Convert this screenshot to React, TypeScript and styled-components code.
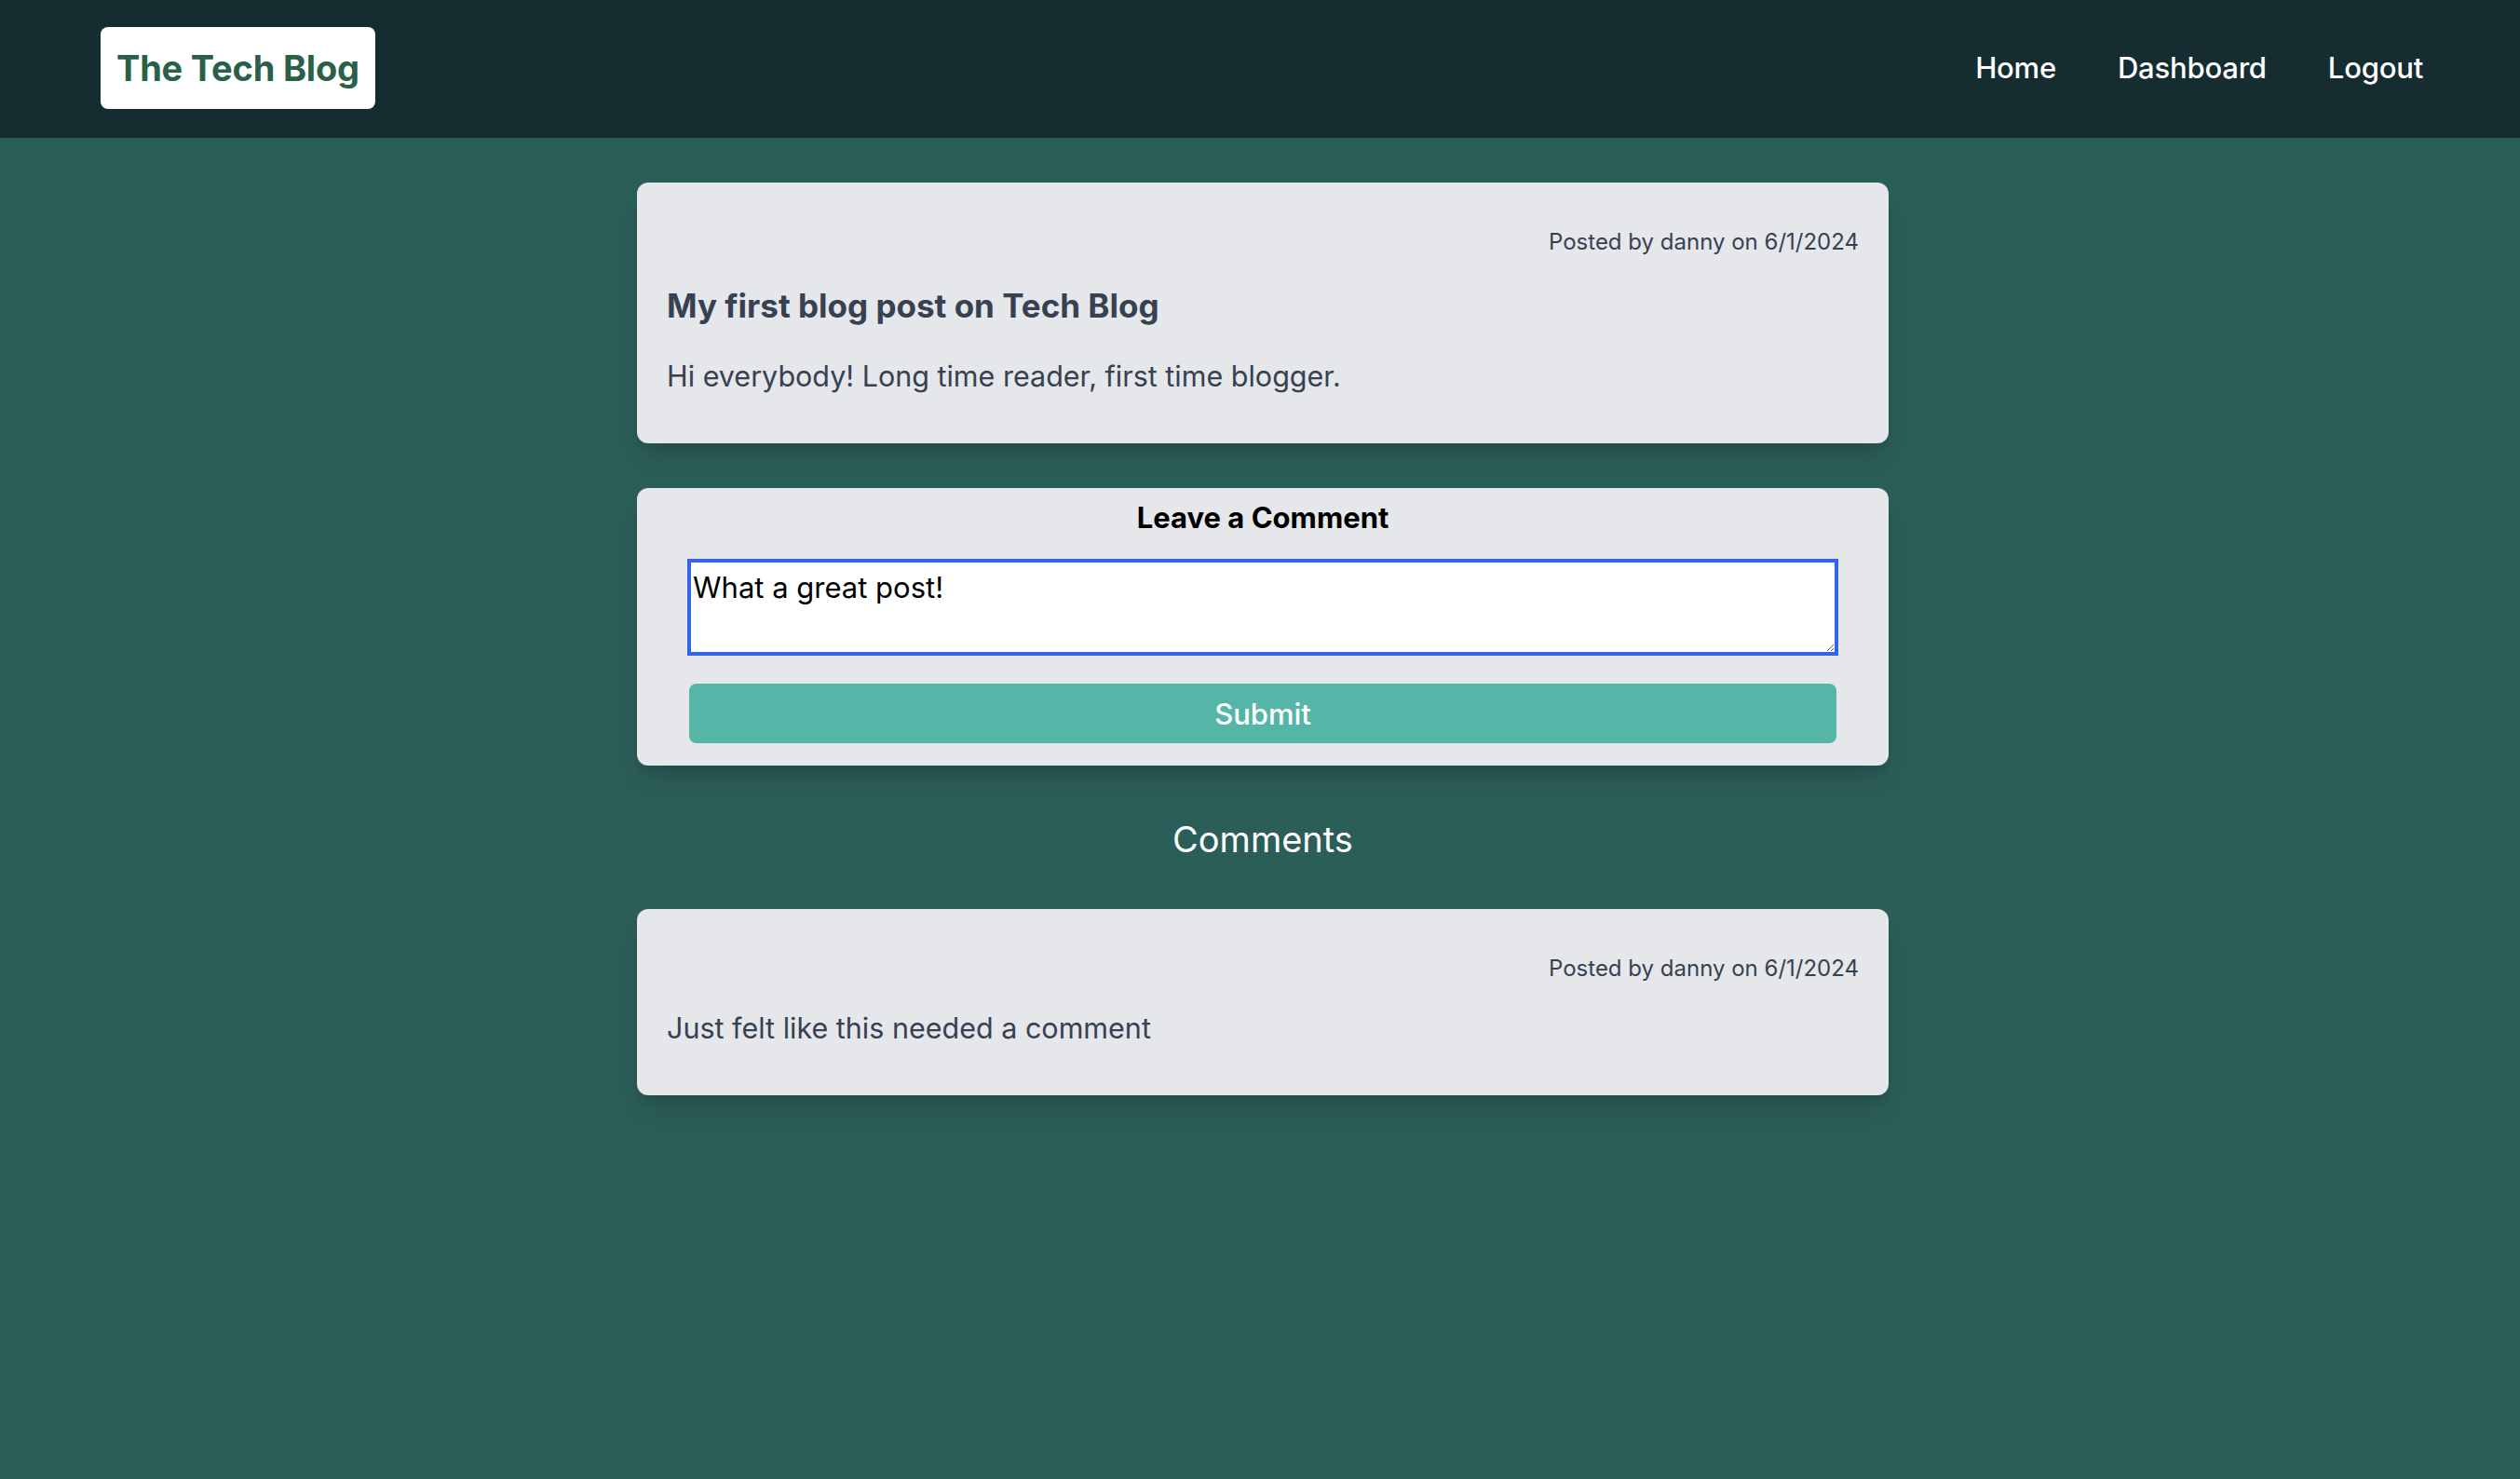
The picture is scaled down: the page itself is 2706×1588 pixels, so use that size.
import React from "react";
import styled, { createGlobalStyle } from "styled-components";

const Global = createGlobalStyle`
  html, body {
    margin: 0;
    padding: 0;
    background: #2c5e59;
    font-family: Inter, "Noto Sans", "Liberation Sans", sans-serif;
  }
  * { box-sizing: border-box; }
`;

const Page = styled.div`
  min-height: 1588px;
  background: #2c5e59;
`;

const Header = styled.header`
  height: 148px;
  background: #152d30;
  display: flex;
  align-items: center;
  justify-content: space-between;
  padding: 0 104px 2px 108px;
`;

const Logo = styled.a`
  display: flex;
  align-items: center;
  height: 88px;
  padding: 0 17px;
  background: #ffffff;
  border-radius: 8px;
  color: #2a5f4a;
  font-size: 38px;
  font-weight: 700;
  letter-spacing: -0.2px;
  text-decoration: none;
`;

const Nav = styled.nav`
  display: flex;
  align-items: center;
  gap: 66px;
`;

const NavLink = styled.a`
  color: #ffffff;
  font-size: 31px;
  font-weight: 500;
  letter-spacing: -0.2px;
  line-height: 48px;
  text-decoration: none;
`;

const Main = styled.main`
  width: 1344px;
  margin: 0 0 0 calc(50% - 669px);
  padding-top: 48px;
  display: flex;
  flex-direction: column;
  gap: 48px;
`;

const Card = styled.section<{ $compact?: boolean }>`
  background: #e5e7eb;
  border-radius: 12px;
  box-shadow: 0 20px 30px -6px rgba(0, 0, 0, 0.14),
    0 8px 12px -4px rgba(0, 0, 0, 0.1);
  display: flex;
  flex-direction: column;
  gap: 24px;
  padding: ${(p) => (p.$compact ? "8px 56px 24px" : "48px 32px")};
`;

const Meta = styled.p`
  margin: 0;
  text-align: right;
  color: #374151;
  font-size: 24px;
  line-height: 32px;
`;

const Title = styled.h2`
  margin: 0;
  color: #374151;
  font-size: 35px;
  line-height: 56px;
  font-weight: 700;
`;

const Body = styled.p`
  margin: 0;
  color: #374151;
  font-size: 30.5px;
  line-height: 48px;
`;

const FormTitle = styled.h3`
  margin: 0 0 -2px;
  text-align: center;
  color: #000000;
  font-size: 31px;
  line-height: 48px;
  font-weight: 700;
`;

const TextArea = styled.textarea`
  display: block;
  width: 100%;
  height: 100px;
  margin: 0;
  padding: 3px 2px 0;
  border: 2px solid #3464e8;
  outline: 2px solid #3464e8;
  border-radius: 0;
  background: #ffffff;
  color: #000000;
  font-family: Inter, "Noto Sans", "Liberation Sans", sans-serif;
  font-size: 31px;
  line-height: 48px;
  resize: vertical;
`;

const SubmitButton = styled.button`
  height: 64px;
  margin-top: 8px;
  border: none;
  border-radius: 8px;
  background: #55b5a7;
  color: #ffffff;
  font-family: Inter, "Noto Sans", "Liberation Sans", sans-serif;
  font-size: 31px;
  font-weight: 500;
  cursor: pointer;
`;

const SectionTitle = styled.h2`
  margin: 3px 0 -1px;
  text-align: center;
  color: #ffffff;
  font-size: 38px;
  line-height: 56px;
  font-weight: 400;
`;

export default function App() {
  return (
    <Page>
      <Global />
      <Header>
        <Logo href="#">The Tech Blog</Logo>
        <Nav>
          <NavLink href="#">Home</NavLink>
          <NavLink href="#">Dashboard</NavLink>
          <NavLink href="#">Logout</NavLink>
        </Nav>
      </Header>
      <Main>
        <Card>
          <Meta>Posted by danny on 6/1/2024</Meta>
          <Title>My first blog post on Tech Blog</Title>
          <Body>Hi everybody! Long time reader, first time blogger.</Body>
        </Card>
        <Card $compact>
          <FormTitle>Leave a Comment</FormTitle>
          <TextArea defaultValue="What a great post!" />
          <SubmitButton type="button">Submit</SubmitButton>
        </Card>
        <SectionTitle>Comments</SectionTitle>
        <Card>
          <Meta>Posted by danny on 6/1/2024</Meta>
          <Body>Just felt like this needed a comment</Body>
        </Card>
      </Main>
    </Page>
  );
}
